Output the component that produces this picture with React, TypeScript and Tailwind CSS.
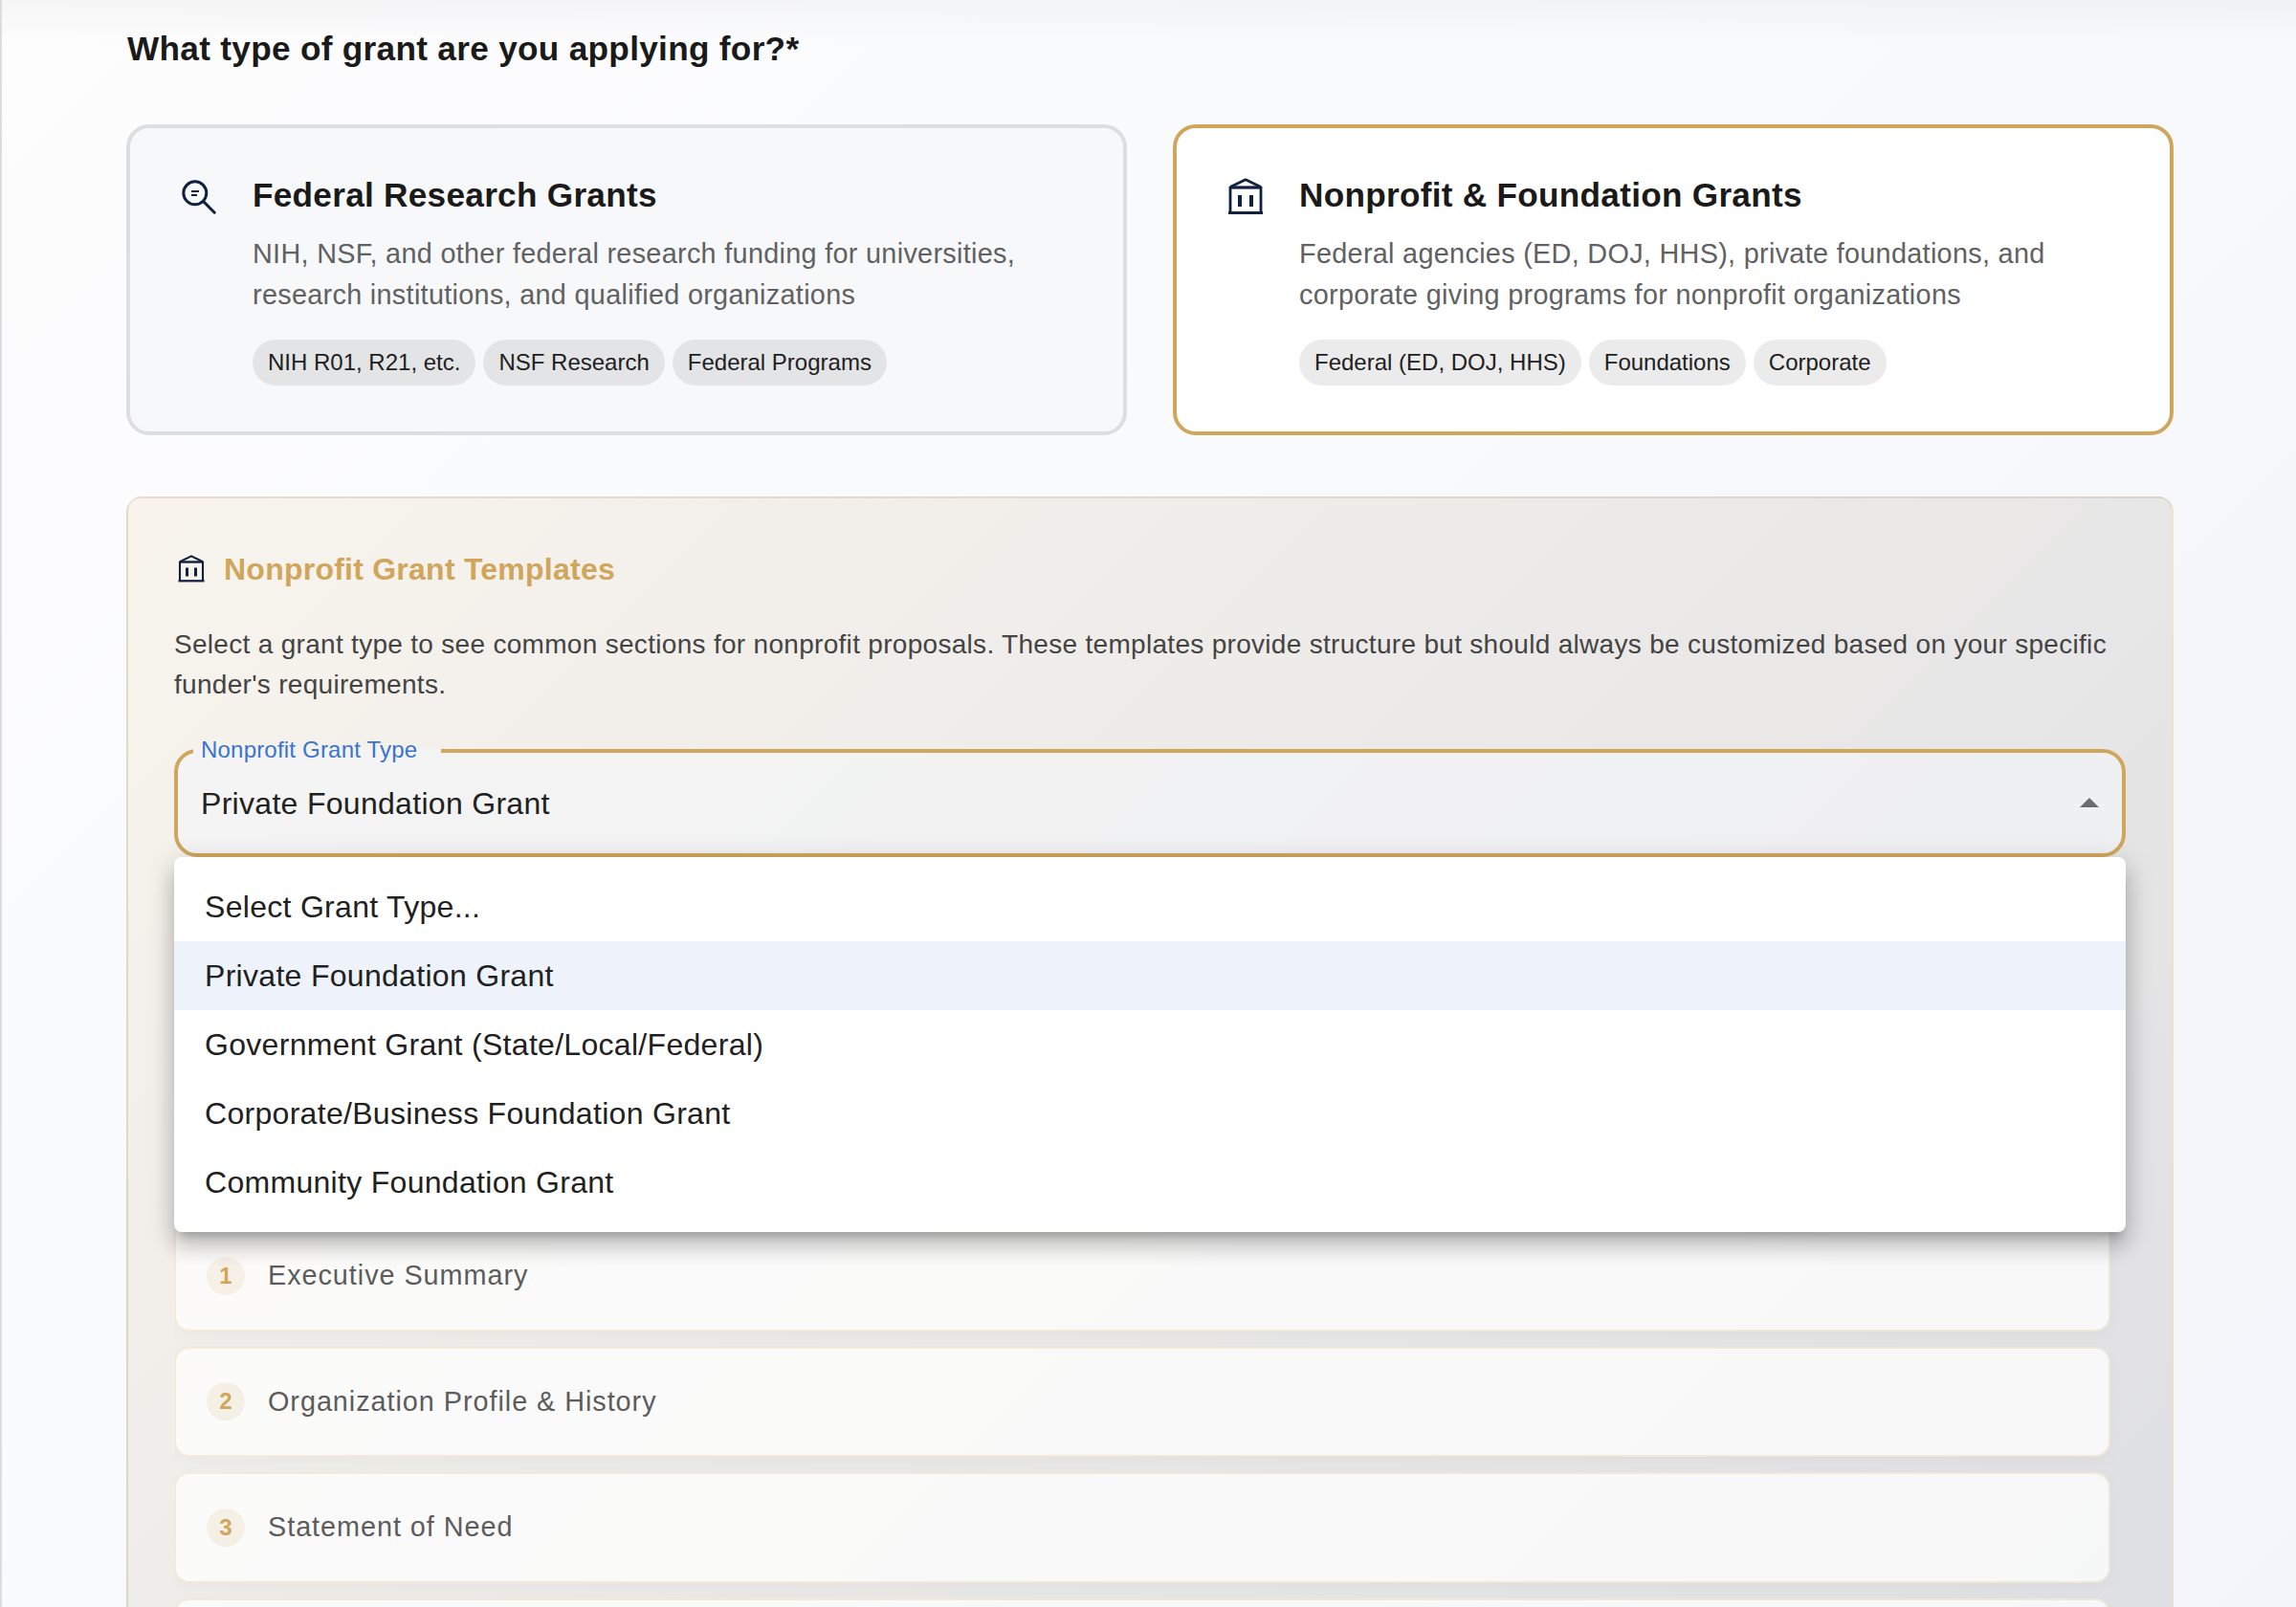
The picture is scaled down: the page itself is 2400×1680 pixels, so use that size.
function SearchIcon() {
  return (
    <svg viewBox="0 0 48 48" className="size-12 shrink-0" fill="none" stroke="#10203f">
      <circle cx="19.8" cy="19.8" r="12" strokeWidth="3" />
      <path d="M28.4 28.4 40.2 40.2" strokeWidth="3" strokeLinecap="round" />
      <path d="M16 18h8M16 22h6" strokeWidth="2" />
    </svg>
  );
}

function BankIcon({ className }: { className: string }) {
  return (
    <svg viewBox="0 0 48 48" className={className} fill="none" stroke="#10203f">
      <path d="M8 13.6 24 5.8 40 13.6" strokeWidth="2.8" strokeLinejoin="round" />
      <path d="M8 14h32" strokeWidth="3.2" />
      <path d="M8 13v27M40 13v27" strokeWidth="2.8" />
      <path d="M6 40.4h36" strokeWidth="3" />
      <path d="M18 22V34M30 22V34" strokeWidth="4" />
    </svg>
  );
}

type CardProps = {
  icon: React.ReactNode;
  title: string;
  lines: [string, string];
  chips: string[];
  selected?: boolean;
};

function GrantCard({ icon, title, lines, chips, selected }: CardProps) {
  return (
    <div
      className={`flex h-[325px] items-start gap-8 rounded-3xl border-4 p-12 ${
        selected ? 'border-[#d0a65c] bg-white' : 'border-[#dddee0] bg-[#f7f8fa]'
      }`}
    >
      {icon}
      <div>
        <h3 className="text-[35.2px] leading-[44px] font-bold tracking-[0.27px] text-[#1a1a1a]">{title}</h3>
        <p className="mt-[18px] text-[28.8px] leading-[43.2px] tracking-[0.31px] whitespace-nowrap text-[#606162]">
          {lines[0]}
          <br />
          {lines[1]}
        </p>
        <div className="mt-[24.6px] flex gap-2">
          {chips.map((chip) => (
            <span
              key={chip}
              className="flex h-12 items-center rounded-full bg-black/8 px-4 text-2xl leading-none text-[#212121]"
            >
              {chip}
            </span>
          ))}
        </div>
      </div>
    </div>
  );
}

const options = [
  'Select Grant Type...',
  'Private Foundation Grant',
  'Government Grant (State/Local/Federal)',
  'Corporate/Business Foundation Grant',
  'Community Foundation Grant',
];

const sections = ['Executive Summary', 'Organization Profile & History', 'Statement of Need'];

const sectionBox =
  'flex h-[115.5px] shrink-0 items-center gap-6 rounded-2xl border-2 border-[rgba(208,166,92,0.2)] bg-white/75 pl-8 shadow-[0_4px_16px_rgba(0,0,0,0.03)]';

function GrantTypeSelect() {
  return (
    <div className="relative mt-[46px] flex h-[113px] items-center justify-between rounded-3xl bg-[rgba(243,245,247,0.68)] pr-[14px] pl-7">
      <fieldset className="pointer-events-none absolute inset-x-0 -top-2 bottom-0 rounded-3xl border-4 border-[#d0a65c] pl-4">
        <legend className="h-5 w-[259px]" />
      </fieldset>
      <label className="absolute -top-[14px] left-7 text-2xl leading-[30px] tracking-[0.2px] text-[#3a74d0]">
        Nonprofit Grant Type
      </label>
      <span className="text-[32px] leading-[46px] tracking-[0.3px] text-[#212121]">Private Foundation Grant</span>
      <svg viewBox="0 0 24 24" className="size-12" fill="#6c6d6e">
        <path d="M7 14l5-5 5 5z" />
      </svg>
      <ul className="absolute inset-x-0 top-full z-10 rounded-lg bg-white py-4 shadow-[0_10px_10px_-6px_rgba(0,0,0,0.2),0_16px_20px_2px_rgba(0,0,0,0.14),0_6px_28px_4px_rgba(0,0,0,0.12)]">
        {options.map((option, i) => (
          <li
            key={option}
            className={`flex h-[72px] items-center px-8 text-[32px] tracking-[0.3px] text-[#212121] ${
              i === 1 ? 'bg-[#eef3fb]' : ''
            }`}
          >
            {option}
          </li>
        ))}
      </ul>
    </div>
  );
}

export default function App() {
  return (
    <div className="h-[1680px] w-[2400px] overflow-hidden border-l-2 border-[#dcdcdf] bg-[linear-gradient(180deg,rgba(0,0,0,0.03),rgba(0,0,0,0)_44px),linear-gradient(135deg,#fdfdfe,#f9fafc_45%,#f3f5fa)] pr-32 pl-[130px] font-['Liberation_Sans',Arial,sans-serif]">
      <h2 className="pt-6 pl-px text-[35.2px] leading-[54px] font-bold tracking-[0.3px] text-[#1a1a1a]">
        What type of grant are you applying for?*
      </h2>

      <div className="mt-[52px] grid grid-cols-2 gap-12">
        <GrantCard
          icon={<SearchIcon />}
          title="Federal Research Grants"
          lines={[
            'NIH, NSF, and other federal research funding for universities,',
            'research institutions, and qualified organizations',
          ]}
          chips={['NIH R01, R21, etc.', 'NSF Research', 'Federal Programs']}
        />
        <GrantCard
          selected
          icon={<BankIcon className="size-12 shrink-0" />}
          title="Nonprofit & Foundation Grants"
          lines={[
            'Federal agencies (ED, DOJ, HHS), private foundations, and',
            'corporate giving programs for nonprofit organizations',
          ]}
          chips={['Federal (ED, DOJ, HHS)', 'Foundations', 'Corporate']}
        />
      </div>

      <section className="mt-16 h-[1300px] rounded-2xl border-2 border-[rgba(208,166,92,0.2)] bg-[linear-gradient(135deg,#f8f4ed,#dedfe3)] p-12">
        <div className="flex h-[51px] items-center gap-4">
          <BankIcon className="size-9 shrink-0" />
          <h3 className="text-[32px] font-bold tracking-[0.24px] text-[#d0a65c]">Nonprofit Grant Templates</h3>
        </div>
        <p className="mt-[33px] text-[28px] leading-[42px] tracking-[0.301px] text-[#444444]">
          Select a grant type to see common sections for nonprofit proposals. These templates provide structure but
          should always be customized based on your specific
          <br />
          funder's requirements.
        </p>

        <GrantTypeSelect />

        <ol className="mt-[364px] flex h-[600px] flex-col gap-4 overflow-hidden pt-4 pr-4">
          {sections.map((name, i) => (
            <li key={name} className={sectionBox}>
              <span className="flex size-10 items-center justify-center rounded-full bg-[rgba(208,166,92,0.12)] text-2xl leading-none font-bold text-[#d0a65c]">
                {i + 1}
              </span>
              <span className="text-[28.8px] tracking-[0.96px] text-[#5c5c5c]">{name}</span>
            </li>
          ))}
          <li className={sectionBox} />
        </ol>
      </section>
    </div>
  );
}
